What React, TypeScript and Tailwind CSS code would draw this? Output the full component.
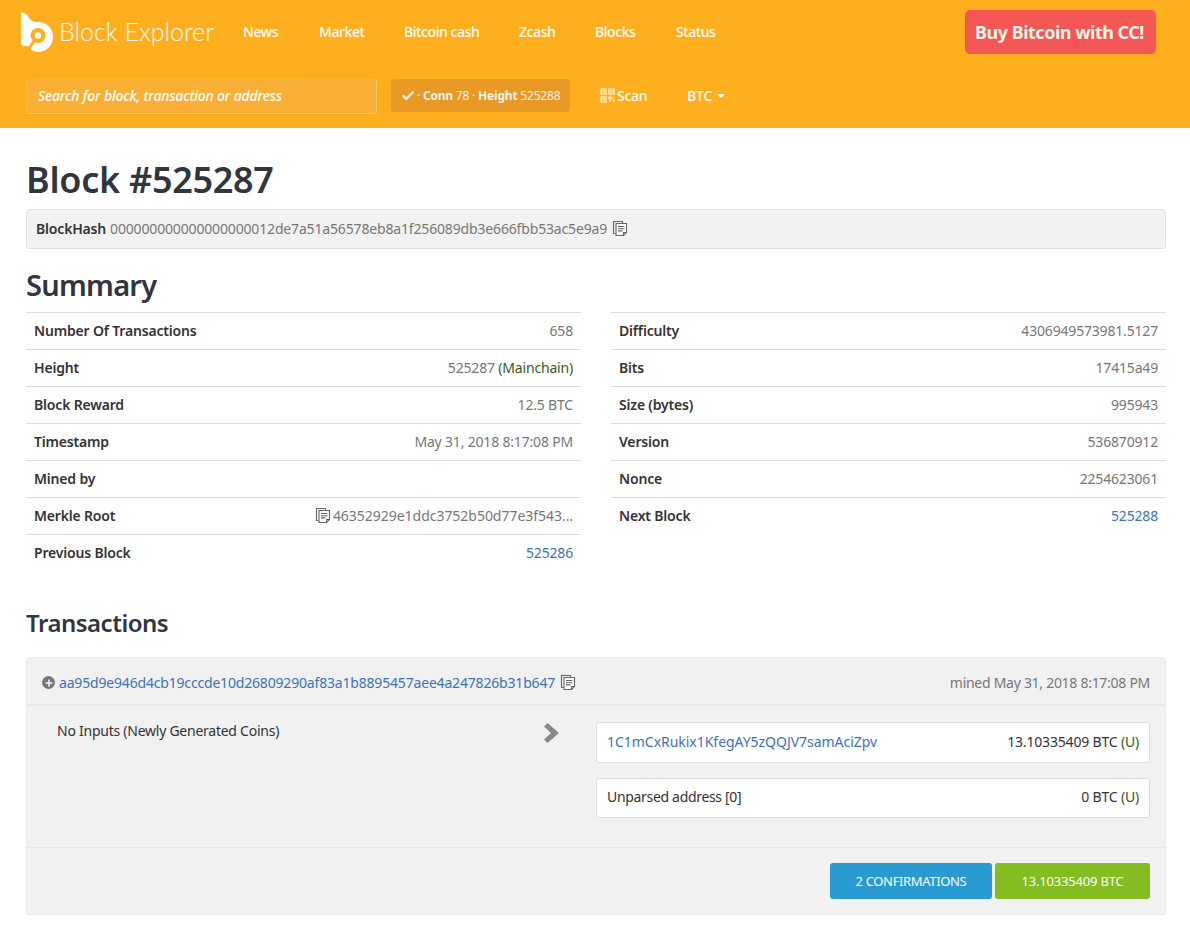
import type { ReactNode } from 'react'
import { Check, Plus } from 'lucide-react'

const font = "font-['Noto_Sans',sans-serif]"

const navLinks = [
  { label: 'News', className: 'w-[76px]' },
  { label: 'Market', className: 'w-[85px]' },
  { label: 'Bitcoin cash', className: 'w-[115px]' },
  { label: 'Zcash', className: 'w-[76px]' },
  { label: 'Blocks', className: 'w-[81px]' },
  { label: 'Status', className: 'w-[60px]' },
]

type Row = { label: string; value: ReactNode }

const leftRows: Row[] = [
  { label: 'Number Of Transactions', value: '658' },
  {
    label: 'Height',
    value: (
      <>
        525287 <span className="text-[#3c5a22]">(Mainchain)</span>
      </>
    ),
  },
  { label: 'Block Reward', value: '12.5 BTC' },
  { label: 'Timestamp', value: 'May 31, 2018 8:17:08 PM' },
  { label: 'Mined by', value: '' },
  {
    label: 'Merkle Root',
    value: (
      <span className="flex items-center justify-end gap-[2px] tracking-[-0.03px]">
        <CopyIcon />
        46352929e1ddc3752b50d77e3f543…
      </span>
    ),
  },
  { label: 'Previous Block', value: <span className="text-[#3d72b8]">525286</span> },
]

const rightRows: Row[] = [
  { label: 'Difficulty', value: '4306949573981.5127' },
  { label: 'Bits', value: '17415a49' },
  { label: 'Size (bytes)', value: '995943' },
  { label: 'Version', value: '536870912' },
  { label: 'Nonce', value: '2254623061' },
  { label: 'Next Block', value: <span className="text-[#3d72b8]">525288</span> },
]

function CopyIcon() {
  return (
    <svg width="16" height="17" viewBox="0 0 16 17" fill="none" stroke="#666" strokeWidth="1.1">
      <path d="M3.5 13.5H1.5V1.5H10.5V3" />
      <path d="M4 3.5H14.5V12.5L11.5 15.5H4Z" fill="#fff" />
      <path d="M6 6.5H12.5M6 8.7H12.5M6 10.9H10.5" />
      <path d="M11.5 15.5V12.5H14.5" />
    </svg>
  )
}

function Logo() {
  return (
    <svg width="34" height="41" viewBox="0 0 34 41" fill="#fff">
      <path d="M1 0.5C5 0 7.5 2.5 8.5 5C10 8 13 10 18 10C27 10 33 16.5 33 25C33 33.5 26 40 18 40C14 40 11 38 10 36L8 34C5 34.5 1 34 1 31Z" />
      <circle cx="18" cy="23.5" r="7.5" fill="#ffaf1e" />
      <path d="M14 29L9 36.5" stroke="#ffaf1e" strokeWidth="3" />
      <circle cx="18" cy="23.5" r="3.2" fill="#fff" />
    </svg>
  )
}

function QrIcon() {
  return (
    <svg width="15" height="15" viewBox="0 0 15 15" fill="none" stroke="#fff" strokeWidth="1.2">
      <path d="M1 1h5v5H1zM9 1h5v5H9zM1 9h5v5H1z" />
      <path d="M3 3h1v1H3zM11 3h1v1h-1zM3 11h1v1H3z" />
      <path d="M9 9h2v2H9zM12.5 9.5H14M9 13.5h2M12 12h2v2" />
    </svg>
  )
}

function InfoTable({ rows }: { rows: Row[] }) {
  return (
    <div className="flex-1">
      {rows.map((row) => (
        <div
          key={row.label}
          className="flex h-[37px] items-center justify-between border-t border-[#dcdcdc] px-2 pb-[2px] text-[14px]"
        >
          <span className="font-semibold text-[#333]">{row.label}</span>
          <span className="text-[#777]">{row.value}</span>
        </div>
      ))}
    </div>
  )
}

function OutputRow({
  address,
  amount,
  link,
  className,
}: {
  address: string
  amount: string
  link?: boolean
  className: string
}) {
  return (
    <div
      className={`flex items-center justify-between rounded-[3px] border border-[#ddd] bg-white px-[10px] text-[14px] ${className}`}
    >
      <span className={link ? 'tracking-[-0.03px] text-[#3d72b8]' : 'tracking-[-0.32px] text-[#333]'}>{address}</span>
      <span className="text-[#333]">
        {amount} <span className="text-[#3c5a22]">(U)</span>
      </span>
    </div>
  )
}

export default function App() {
  return (
    <div className={`${font} min-h-[928px] bg-white tracking-[-0.18px]`}>
      <header className="h-[128px] bg-[#ffaf1e] pl-[20px] pr-[34px] text-white">
        <div className="flex h-[64px] items-center">
          <div className="flex w-[223px] items-center gap-[5px]">
            <Logo />
            <span className="pb-[1px] font-['Lato',sans-serif] text-[25px] font-light leading-none tracking-normal">
              Block Explorer
            </span>
          </div>
          <nav className="flex pb-[2px] text-[14px] font-medium tracking-[-0.42px]">
            {navLinks.map((link) => (
              <a key={link.label} className={link.className}>
                {link.label}
              </a>
            ))}
          </nav>
          <a className="ml-auto flex h-[44px] w-[191px] items-center justify-center rounded-[5px] bg-[#f45555] pr-[2px] text-[18px] font-bold tracking-[-0.5px] text-[#f5f5e6]">
            Buy Bitcoin with CC!
          </a>
        </div>
        <div className="mt-[15px] flex items-start pl-[6px]">
          <div className="flex h-[35px] w-[351px] items-center rounded-[3px] border border-[#fbb840] border-b-[#fdcb6e] border-r-[#fdcb6e] bg-[#fab035] pb-[2px] pl-[11px] text-[14px] font-medium italic tracking-[-0.2px]">
            Search for block, transaction or address
          </div>
          <div className="ml-[14px] flex h-[33px] w-[179px] items-center whitespace-nowrap rounded-[3px] bg-[#e89a25] pl-[10px] text-[12px] tracking-[-0.2px] text-[#f2f2f2]">
            <Check size={14} strokeWidth={4} className="mr-[2px]" />
            <span>
              · <b>Conn</b> 78 · <b>Height</b> 525288
            </span>
          </div>
          <div className="ml-[30px] flex h-[33px] w-[87px] items-center gap-[2px] text-[14px] font-medium tracking-[-0.3px]">
            <QrIcon />
            Scan
          </div>
          <div className="flex h-[33px] items-center text-[14px] font-medium">
            BTC
            <span className="ml-[5px] mt-[1px] h-0 w-0 border-x-[4px] border-t-[4px] border-x-transparent border-t-white" />
          </div>
        </div>
      </header>

      <main className="px-[26px] pr-[24px]">
        <h1 className="mt-[29px] text-[36px] font-semibold leading-[46px] tracking-[-0.3px] text-[#30363c]">
          Block #525287
        </h1>
        <div className="mt-[6px] flex h-[40px] items-center rounded-[3px] border border-[#e0e0e0] bg-[#f2f2f2] px-[9px] pb-[1px] text-[14px]">
          <span className="mr-[4px] font-semibold text-[#333]">BlockHash</span>
          <span className="mr-[5px] tracking-[-0.16px] text-[#777]">
            000000000000000000012de7a51a56578eb8a1f256089db3e666fbb53ac5e9a9
          </span>
          <CopyIcon />
        </div>

        <h2 className="mt-[17px] text-[29px] font-semibold leading-[38px] tracking-[-0.75px] text-[#30363c]">Summary</h2>
        <div className="mt-[8px] flex gap-[30px]">
          <InfoTable rows={leftRows} />
          <InfoTable rows={rightRows} />
        </div>

        <h3 className="mt-[37px] text-[24px] font-semibold leading-[30px] tracking-[-0.5px] text-[#30363c]">
          Transactions
        </h3>
        <section className="mt-[19px] h-[258px] rounded-[3px] border border-[#e8e8e8] bg-[#f1f1f1] text-[14px]">
          <div className="flex h-[48px] items-center justify-between border-b-2 border-[#e6e6e6] pl-[15px] pr-[15px] pt-[3px]">
            <div className="flex items-center">
              <span className="mr-[4px] flex h-[13px] w-[13px] items-center justify-center rounded-full bg-[#777]">
                <Plus size={10} strokeWidth={4} color="#f1f1f1" />
              </span>
              <span className="mr-[5px] text-[#3d72b8]">aa95d9e946d4cb19cccde10d26809290af83a1b8895457aee4a247826b31b647</span>
              <CopyIcon />
            </div>
            <span className="tracking-[-0.28px] text-[#777]">mined May 31, 2018 8:17:08 PM</span>
          </div>
          <div className="flex h-[142px] border-b border-[#e6e6e6] pr-[15px]">
            <div className="flex w-[569px] items-start justify-between pl-[30px] pr-[37px] pt-[14px] tracking-[-0.25px] text-[#333]">
              No Inputs (Newly Generated Coins)
              <svg width="15" height="20" viewBox="0 0 15 20" fill="#888" className="mt-[3px]">
                <path d="M3.5 0L15 10L3.5 20L0 16.5L7 10L0 3.5Z" />
              </svg>
            </div>
            <div className="flex-1">
              <div className="flex flex-col gap-[15px] pt-[16px]">
                <OutputRow
                  link
                  address="1C1mCxRukix1KfegAY5zQQJV7samAciZpv"
                  amount="13.10335409 BTC"
                  className="h-[41px] pb-[2px]"
                />
                <OutputRow address="Unparsed address [0]" amount="0 BTC" className="h-[40px] pb-[3px]" />
              </div>
            </div>
          </div>
          <div className="flex justify-end gap-[3px] pr-[15px] pt-[15px] text-[13px] text-white">
            <span className="flex h-[36px] w-[162px] items-center justify-center rounded-[3px] bg-[#2a9ad2] pt-[1px] tracking-[-0.35px]">
              2 CONFIRMATIONS
            </span>
            <span className="flex h-[36px] w-[155px] items-center justify-center rounded-[3px] bg-[#83bd22] pt-[1px]">
              13.10335409 BTC
            </span>
          </div>
        </section>
      </main>
    </div>
  )
}
